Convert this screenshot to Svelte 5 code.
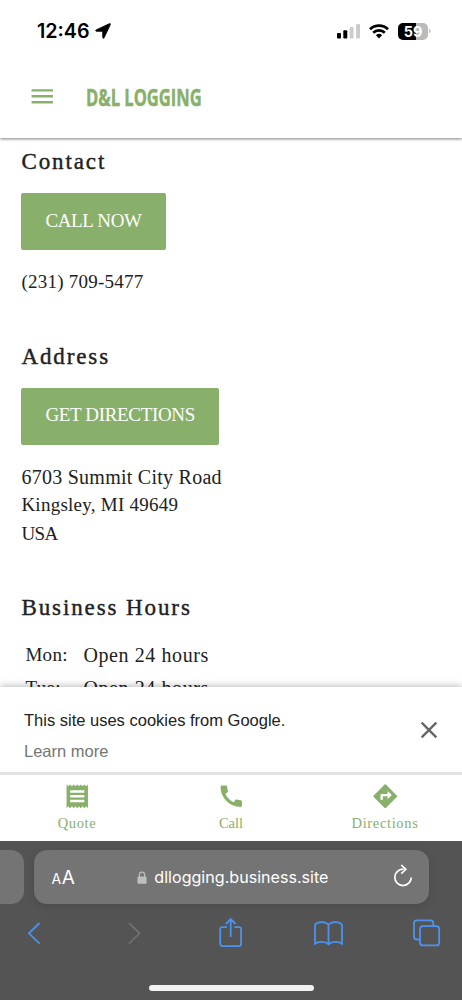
<script>
  const hours = [
    { day: "Mon:", time: "Open 24 hours" },
    { day: "Tue:", time: "Open 24 hours" },
  ];

  const actions = [
    {
      label: "Quote",
      spacing: "wide",
      path: "M18 17H6v-2h12v2zm0-4H6v-2h12v2zm0-4H6V7h12v2zM3 22l1.5-1.5L6 22l1.5-1.5L9 22l1.5-1.5L12 22l1.5-1.5L15 22l1.5-1.5L18 22l1.5-1.5L21 22V2l-1.5 1.5L18 2l-1.5 1.5L15 2l-1.5 1.5L12 2l-1.5 1.5L9 2 7.5 3.5 6 2 4.5 3.5 3 2v20z",
    },
    {
      label: "Call",
      spacing: "tight",
      path: "M20.01 15.38c-1.23 0-2.42-.2-3.53-.56-.35-.12-.74-.03-1.01.24l-1.57 1.97c-2.83-1.35-5.48-3.9-6.89-6.83l1.95-1.66c.27-.28.35-.67.24-1.02-.37-1.11-.56-2.3-.56-3.53 0-.54-.45-.99-.99-.99H4.19C3.65 3 3 3.24 3 3.99 3 13.28 10.73 21 20.01 21c.71 0 .99-.63.99-1.18v-3.45c0-.54-.45-.99-.99-.99z",
    },
    {
      label: "Directions",
      spacing: "wide",
      path: "M21.71 11.29l-9-9c-.39-.39-1.02-.39-1.41 0l-9 9c-.39.39-.39 1.02 0 1.41l9 9c.39.39 1.02.39 1.41 0l9-9c.39-.38.39-1.01 0-1.41zM14 14.5V12h-4v3H8v-4c0-.55.45-1 1-1h5V7.5l3.5 3.5-3.5 3.5z",
    },
  ];
</script>

<div class="phone">
  <div class="status-bar">
    <span class="time">12:46</span>
    <svg class="location" width="16" height="16" viewBox="0 0 16 16">
      <path
        d="M14.400.7 1.200 6.900c-.8.400-.6 1.300.3 1.300l6.200.1.100 6.200c0 .9.900 1 1.300.2L15.300 1.600c.3-.7-.2-1.200-.9-.9z"
        stroke="#000"
        stroke-width=".9"
      />
    </svg>
    <div class="indicators">
      <svg width="24" height="16" viewBox="0 0 24 16">
        <rect x="0" y="10" width="4" height="5.500" rx="1" />
        <rect x="6.300" y="7.300" width="4" height="8.200" rx="1" />
        <rect x="12.600" y="4" width="4" height="11.500" rx="1" fill="#ccc" />
        <rect x="19" y="1" width="4" height="14.500" rx="1" fill="#ccc" />
      </svg>
      <svg class="wifi" width="20" height="16" viewBox="0 0 20 16">
        <g fill="none" stroke="#000" stroke-width="2.700">
          <path d="M1 6.200a12.900 12.900 0 0 1 18 0" />
          <path d="M4.200 9.700a8.300 8.300 0 0 1 11.600 0" />
        </g>
        <path d="M6.900 12.200a4.500 4.500 0 0 1 6.200 0L10 15.400z" />
      </svg>
      <div class="battery">59</div>
      <svg width="2" height="6" viewBox="0 0 2 6">
        <path d="M0 1c2 .5 2 3.500 0 4z" fill="#bbb" />
      </svg>
    </div>
  </div>

  <header>
    <svg class="menu" width="28.500" height="28.500" viewBox="0 0 24 24">
      <path d="M3 18h18v-2H3v2zm0-5h18v-2H3v2zm0-7v2h18V6H3z" />
    </svg>
    <h1>D&amp;L LOGGING</h1>
  </header>

  <main>
    <section>
      <h2>Contact</h2>
      <button>CALL NOW</button>
      <p class="number">(231) 709-5477</p>
    </section>
    <section>
      <h2>Address</h2>
      <button>GET DIRECTIONS</button>
      <p class="street">6703 Summit City Road</p>
      <p class="city">Kingsley, MI 49649</p>
      <p class="country">USA</p>
    </section>
    <section>
      <h2>Business Hours</h2>
      {#each hours as row}
        <div class="hours-row">
          <span class="day">{row.day}</span>
          <span class="open">{row.time}</span>
        </div>
      {/each}
    </section>
  </main>

  <div class="cookies">
    <div>
      <p>This site uses cookies from Google.</p>
      <p class="more">Learn more</p>
    </div>
    <svg width="28" height="28" viewBox="0 0 24 24">
      <path
        d="M19 6.410 17.590 5 12 10.590 6.410 5 5 6.410 10.590 12 5 17.590 6.410 19 12 13.410 17.590 19 19 17.590 13.410 12z"
        fill="#666"
      />
    </svg>
  </div>

  <nav>
    {#each actions as action}
      <div class="action">
        <svg width="28.500" height="28.500" viewBox="0 0 24 24">
          <path d={action.path} />
        </svg>
        <span class={action.spacing}>{action.label}</span>
      </div>
    {/each}
  </nav>

  <footer>
    <div class="tabs">
      <div class="previous-tab"></div>
      <div class="address-bar">
        <span class="text-size"><small>A</small>A</span>
        <div class="url">
          <svg width="10" height="13" viewBox="0 0 10 13">
            <path
              d="M2.400 6V3.700a2.600 2.600 0 0 1 5.200 0V6"
              fill="none"
              stroke="#bdbdbd"
              stroke-width="1.300"
            />
            <rect x=".4" y="5.500" width="9.200" height="7.200" rx="1.300" fill="#bdbdbd" />
          </svg>
          <span>dllogging.business.site</span>
        </div>
        <svg class="reload" width="20" height="24" viewBox="0 0 20 24">
          <path d="M10.500 5.200H10a8.200 8.200 0 1 0 8.200 8.200" />
          <path d="M8.300 1l4.500 4.300-4.500 4.300" />
        </svg>
      </div>
    </div>
    <div class="toolbar">
      <svg viewBox="0 0 32 32"><path d="M21.500 6 11 16.300l10.500 10.300" /></svg>
      <svg class="disabled" viewBox="0 0 32 32"><path d="M13 6l10.500 10.300L13 26.600" /></svg>
      <svg viewBox="0 0 32 32">
        <path d="M13 10.200H8.500a2.300 2.300 0 0 0-2.300 2.300v14.300a2.300 2.300 0 0 0 2.300 2.300h16.300a2.300 2.300 0 0 0 2.300-2.300V12.500a2.300 2.300 0 0 0-2.300-2.300h-4.500" />
        <path d="M16.700 20V2.500M11.800 7l4.900-4.900L21.600 7" />
      </svg>
      <svg viewBox="0 0 32 32">
        <path d="M16.500 8c-2.300-3.600-10.500-4-13.500-.3v19c3-2.500 10.500-2.500 13.500.6 3-3.100 10.500-3.100 13.500-.6v-19C27 4 18.800 4.400 16.500 8zv19.300M16.500 8v19.300" />
      </svg>
      <svg viewBox="0 0 32 32">
        <path d="M9.500 22.500H7a3 3 0 0 1-3-3V6.300a3 3 0 0 1 3-3h13.300a3 3 0 0 1 3 3V9" />
        <rect x="10" y="9.200" width="19.200" height="19.200" rx="3" />
      </svg>
    </div>
    <div class="home-indicator"></div>
  </footer>
</div>

<style>
  :global(body) {
    margin: 0;
    background: #fff;
  }
  .phone {
    width: 462px;
    height: 1000px;
    display: flex;
    flex-direction: column;
    overflow: hidden;
    color: #212121;
    background: #fff;
    font-family: "Liberation Serif", serif;
  }
  svg {
    display: block;
    flex-shrink: 0;
  }
  p,
  h1,
  h2 {
    margin: 0;
    white-space: nowrap;
  }

  .status-bar {
    height: 62px;
    flex-shrink: 0;
    box-sizing: border-box;
    padding: 0 31px 0 37px;
    display: flex;
    align-items: center;
    z-index: 2;
    color: #000;
    background: #fff;
    font-family: Inter, sans-serif;
  }
  .time {
    font-size: 19.7px;
    font-weight: 600;
  }
  .location {
    margin-left: 5px;
  }
  .indicators {
    margin-left: auto;
    display: flex;
    align-items: center;
  }
  .wifi {
    margin: 0 9px 0 8px;
  }
  .battery {
    width: 30px;
    height: 17px;
    margin-right: 1px;
    border-radius: 5px;
    color: #fff;
    background: linear-gradient(to right, #000 59%, #bbb 59%);
    font-size: 14.5px;
    font-weight: 700;
    line-height: 17px;
    text-align: center;
  }

  header {
    height: 76px;
    flex-shrink: 0;
    box-sizing: border-box;
    padding: 0 28px 8px;
    display: flex;
    align-items: center;
    z-index: 1;
    background: #fff;
    box-shadow: 0 1px 3px rgba(0, 0, 0, 0.5);
  }
  .menu {
    fill: #88b06a;
  }
  h1 {
    margin: 1px 0 0 29px;
    color: #88b06a;
    font: 700 24px "Open Sans", sans-serif;
    -webkit-text-stroke: 0.5px #88b06a;
    transform: scaleX(0.69);
    transform-origin: left;
  }

  main {
    height: 549px;
    flex-shrink: 0;
    box-sizing: border-box;
    padding: 9px 21.4px 0;
    overflow: hidden;
  }
  section {
    margin-bottom: 45px;
  }
  h2 {
    margin-bottom: 16px;
    font-size: 23px;
    font-weight: 400;
    line-height: 30px;
    letter-spacing: 1.9px;
    -webkit-text-stroke: 0.4px #212121;
  }
  button {
    display: block;
    height: 57px;
    margin-bottom: 18px;
    padding: 0 24px 2px;
    border: none;
    border-radius: 2px;
    color: #fff;
    background: #88b06a;
    font: 19px "Liberation Serif", serif;
    letter-spacing: -0.34px;
  }
  p {
    font-size: 19px;
    line-height: 28.5px;
  }
  .number,
  .city {
    letter-spacing: 0.25px;
  }
  .street {
    font-size: 20px;
    letter-spacing: 0.26px;
  }
  .country {
    letter-spacing: -0.6px;
  }
  .hours-row {
    display: flex;
    padding-left: 4px;
    font-size: 19px;
    line-height: 32.5px;
  }
  .day {
    width: 58px;
    letter-spacing: 0.3px;
  }
  .open {
    font-size: 20px;
    letter-spacing: 0.6px;
  }

  .cookies {
    height: 85px;
    flex-shrink: 0;
    box-sizing: border-box;
    padding: 0 19px 0 24px;
    display: flex;
    align-items: center;
    justify-content: space-between;
    z-index: 1;
    background: #fff;
    box-shadow: 0 0 8px rgba(0, 0, 0, 0.35);
  }
  .cookies p {
    font: 16.5px/31px "Liberation Sans", sans-serif;
  }
  .cookies p:first-child {
    padding-top: 12px;
  }
  .cookies .more {
    color: #757575;
  }

  nav {
    height: 69px;
    flex-shrink: 0;
    box-sizing: border-box;
    padding-top: 7px;
    display: grid;
    grid-template-columns: repeat(3, 1fr);
    z-index: 2;
    border-top: 3px solid #e3e3e3;
    background: #fff;
  }
  .action {
    display: flex;
    flex-direction: column;
    align-items: center;
    color: #88b06a;
    fill: #88b06a;
    font-size: 14.5px;
    line-height: 16px;
  }
  .action span {
    margin-top: 4px;
  }
  .wide {
    letter-spacing: 0.65px;
  }

  footer {
    flex: 1;
    z-index: 2;
    color: #fff;
    background: #545454;
    font-family: Inter, sans-serif;
  }
  .tabs {
    display: flex;
    gap: 10px;
    padding-top: 9px;
  }
  .previous-tab {
    width: 23.5px;
    height: 54px;
    border-radius: 0 13px 13px 0;
    background: #747474;
  }
  .address-bar {
    width: 395.5px;
    height: 54px;
    box-sizing: border-box;
    padding: 0 16px 0 18px;
    display: flex;
    align-items: center;
    justify-content: space-between;
    border-radius: 13px;
    background: #747474;
    box-shadow: 0 2px 10px rgba(0, 0, 0, 0.12);
  }
  .text-size {
    font-size: 19px;
  }
  .text-size small {
    margin-right: 0.5px;
    font-size: 14px;
  }
  .url {
    display: flex;
    align-items: center;
    gap: 7px;
    margin-right: 2px;
    font-size: 16.1px;
  }
  .reload {
    margin-bottom: 2px;
    fill: none;
    stroke: #fff;
    stroke-width: 1.7;
  }
  .toolbar {
    display: flex;
    justify-content: space-between;
    padding: 13px 20px 0 18px;
  }
  .toolbar svg {
    width: 32px;
    height: 32px;
    fill: none;
    stroke: #4c93ee;
    stroke-width: 1.8;
  }
  .toolbar .disabled {
    stroke: #707070;
  }
  .home-indicator {
    width: 165px;
    height: 6px;
    margin: 36px auto 0;
    border-radius: 3px;
    background: #f2f2f2;
  }
</style>
